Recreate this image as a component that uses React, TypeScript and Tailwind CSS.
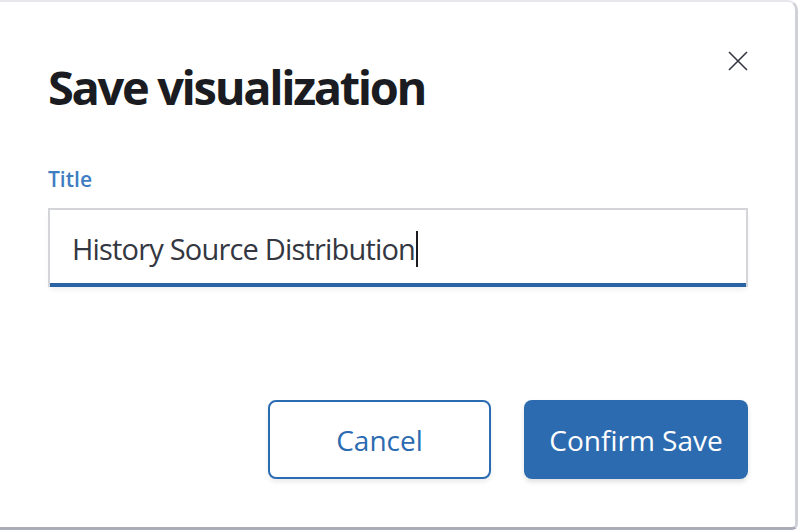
export default function App() {
  return (
    <div className="w-[798px] h-[530px] bg-white overflow-hidden" style={{ fontFamily: '"Open Sans", "Noto Sans", sans-serif' }}>
      <div className="relative flex flex-col h-full bg-white border-t-2 border-r-[3px] border-b-[3px] border-t-[#e6e8ec] border-r-[#cfd1d7] border-b-[#aaacb7] rounded-tr-[10px] rounded-br-[6px] pl-[48px] pr-[47px] pb-[48px]">
        <button className="absolute right-[45px] top-[47px] w-[24px] h-[24px] flex items-center justify-center text-[#343741]">
          <svg width="22" height="22" viewBox="0 0 22 22" fill="none" stroke="currentColor" strokeWidth="1.6">
            <path d="M2 2 L20 20 M20 2 L2 20" />
          </svg>
        </button>
        <h1 className="mt-[56px] text-[47px] leading-[58px] font-bold tracking-[-0.05em] text-[#1a1c21]">
          Save visualization
        </h1>
        <label className="mt-[51px] text-[21px] leading-[24px] font-semibold text-[#3f7dc2]">Title</label>
        <div className="mt-[17px] h-[79px] flex items-center pl-[22px] bg-white border-2 border-[#d3d5d9] border-b-0 shadow-[inset_0_-4px_0_#2a62a6,0_4px_6px_-2px_rgba(0,0,0,0.08)]">
          <span className="text-[29px] tracking-[-0.028em] text-[#343741]">History Source Distribution</span>
          <span className="inline-block w-[2px] h-[36px] bg-[#1a1c21] ml-[1px]" />
        </div>
        <div className="mt-auto flex justify-end gap-[33px]">
          <button className="w-[223px] h-[79px] rounded-[8px] border-2 border-[#2b6bb1] bg-white text-[#2b6bb1] text-[28px] shadow-[0_3px_5px_rgba(0,0,0,0.08)]">
            Cancel
          </button>
          <button className="w-[224px] h-[79px] rounded-[8px] bg-[#2c6bb0] text-white text-[28px] shadow-[0_3px_5px_rgba(0,0,0,0.12)]">
            Confirm Save
          </button>
        </div>
      </div>
    </div>
  );
}
